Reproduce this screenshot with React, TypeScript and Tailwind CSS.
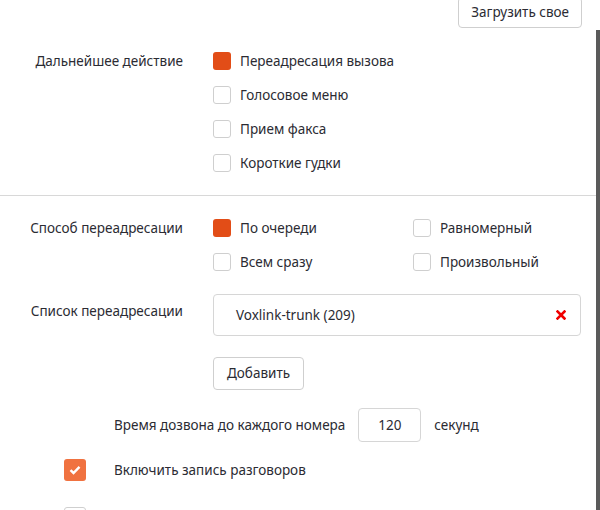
import React from "react";

const font = { fontFamily: '"Noto Sans", "Open Sans", sans-serif' };

function Box({ on }: { on?: boolean }) {
  return on ? (
    <span className="block w-[18px] h-[18px] rounded-[3px] bg-[#e24d17] shrink-0" />
  ) : (
    <span className="block w-[18px] h-[18px] rounded-[3px] border border-[#cfcfcf] bg-white shrink-0" />
  );
}

function Opt({ on, label }: { on?: boolean; label: string }) {
  return (
    <div className="flex items-center h-[34px] gap-[9px]">
      <Box on={on} />
      <span>{label}</span>
    </div>
  );
}

export default function App() {
  return (
    <div
      className="relative w-[600px] h-[510px] overflow-hidden bg-white text-[13.5px] text-[#2b2b33]"
      style={font}
    >
      <div className="absolute right-0 top-[30px] bottom-0 w-[4px] bg-[#5a5a5a]" />
      <div className="w-[596px]">
        <div className="flex justify-end pr-[14px] -mt-[3px]">
          <button className="h-[31px] px-[12px] border border-[#cfcfcf] rounded-[4px] bg-white text-[13.5px] text-[#2b2b33]">
            Загрузить свое
          </button>
        </div>

        <div className="grid grid-cols-[183px_1fr] gap-x-[30px] mt-[16px]">
          <div className="h-[34px] flex items-center justify-end">Дальнейшее действие</div>
          <div>
            <Opt on label="Переадресация вызова" />
            <Opt label="Голосовое меню" />
            <Opt label="Прием факса" />
            <Opt label="Короткие гудки" />
          </div>
        </div>

        <div className="mt-[15px] h-px bg-[#d8d8d8]" />

        <div className="grid grid-cols-[183px_1fr] gap-x-[30px] mt-[15px]">
          <div className="h-[34px] flex items-center justify-end">Способ переадресации</div>
          <div className="grid grid-cols-[200px_1fr]">
            <Opt on label="По очереди" />
            <Opt label="Равномерный" />
            <Opt label="Всем сразу" />
            <Opt label="Произвольный" />
          </div>

          <div className="h-[34px] mt-[15px] flex items-center justify-end">Список переадресации</div>
          <div className="mt-[15px] pr-[15px]">
            <div className="h-[42px] border border-[#d6d6d6] rounded-[4px] flex items-center justify-between pl-[22px] pr-[14px]">
              <span>Voxlink-trunk (209)</span>
              <svg width="10" height="10" viewBox="0 0 10 10">
                <path d="M1.5 1.5 L8.5 8.5 M8.5 1.5 L1.5 8.5" stroke="#f00000" strokeWidth="2.6" strokeLinecap="square" />
              </svg>
            </div>
            <button className="mt-[21px] h-[33px] px-[13px] border border-[#cfcfcf] rounded-[4px] bg-white text-[13.5px] text-[#2b2b33]">
              Добавить
            </button>
          </div>
        </div>

        <div className="flex items-center mt-[18px] pl-[114px]">
          <span>Время дозвона до каждого номера</span>
          <div className="ml-[13px] w-[63px] h-[34px] border border-[#d6d6d6] rounded-[4px] flex items-center justify-center">
            120
          </div>
          <span className="ml-[13px]">секунд</span>
        </div>

        <div className="flex items-center mt-[17px] pl-[64px] h-[22px]">
          <span className="w-[22px] h-[22px] rounded-[3px] bg-[#f07240] flex items-center justify-center">
            <svg width="12" height="10" viewBox="0 0 12 10">
              <path d="M1.5 5.2 L4.5 8 L10.5 1.8" stroke="#fff" strokeWidth="2.4" fill="none" />
            </svg>
          </span>
          <span className="ml-[28px]">Включить запись разговоров</span>
        </div>

        <div className="flex items-center mt-[26px] pl-[64px]">
          <span className="w-[22px] h-[22px] rounded-[3px] border border-[#cfcfcf] bg-white" />
        </div>
      </div>
    </div>
  );
}
